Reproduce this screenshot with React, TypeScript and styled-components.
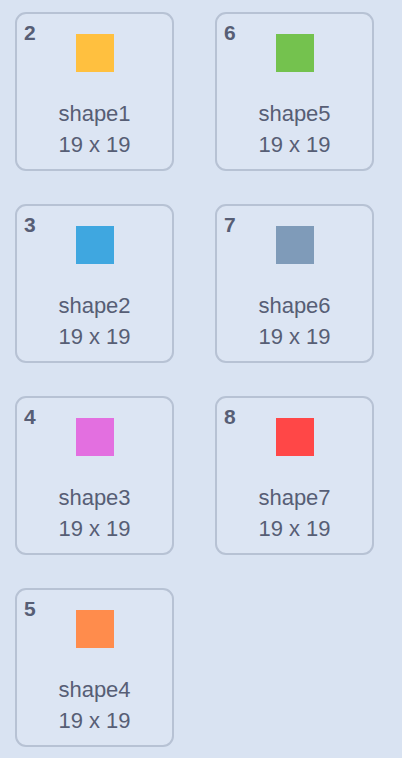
import React from "react";
import styled, { createGlobalStyle } from "styled-components";

const Global = createGlobalStyle`
  html, body { margin: 0; padding: 0; }
  body {
    background: #d9e3f2;
    font-family: "Liberation Sans", Arial, sans-serif;
    width: 402px;
    height: 758px;
    overflow: hidden;
  }
`;

const Grid = styled.div`
  display: grid;
  grid-template-columns: 159px 159px;
  column-gap: 41px;
  row-gap: 33px;
  padding: 12px 0 0 15px;
`;

const Card = styled.div`
  position: relative;
  box-sizing: border-box;
  width: 159px;
  height: 159px;
  border: 2px solid #b7c2d4;
  border-radius: 11px;
  background: #dce5f3;
  display: flex;
  flex-direction: column;
  align-items: center;
  padding-top: 20px;
`;

const Num = styled.span`
  position: absolute;
  left: 7px;
  top: 8px;
  font-size: 21px;
  font-weight: 700;
  color: #575e75;
  line-height: 22px;
`;

const Swatch = styled.div<{ $c: string }>`
  width: 38px;
  height: 38px;
  background: ${(p) => p.$c};
  margin-bottom: 26px;
`;

const Line = styled.div`
  font-size: 22px;
  line-height: 31px;
  color: #575e75;
  text-align: center;
  white-space: nowrap;
`;

const items = [
  { n: 2, name: "shape1", c: "#ffc03f" },
  { n: 6, name: "shape5", c: "#74c24e" },
  { n: 3, name: "shape2", c: "#3fa7e0" },
  { n: 7, name: "shape6", c: "#7f9bb9" },
  { n: 4, name: "shape3", c: "#e36fe0" },
  { n: 8, name: "shape7", c: "#ff4747" },
  { n: 5, name: "shape4", c: "#ff8c4c" },
];

export default function App() {
  return (
    <>
      <Global />
      <Grid>
        {items.map((it) => (
          <Card key={it.n}>
            <Num>{it.n}</Num>
            <Swatch $c={it.c} />
            <Line>{it.name}</Line>
            <Line>19 x 19</Line>
          </Card>
        ))}
      </Grid>
    </>
  );
}
